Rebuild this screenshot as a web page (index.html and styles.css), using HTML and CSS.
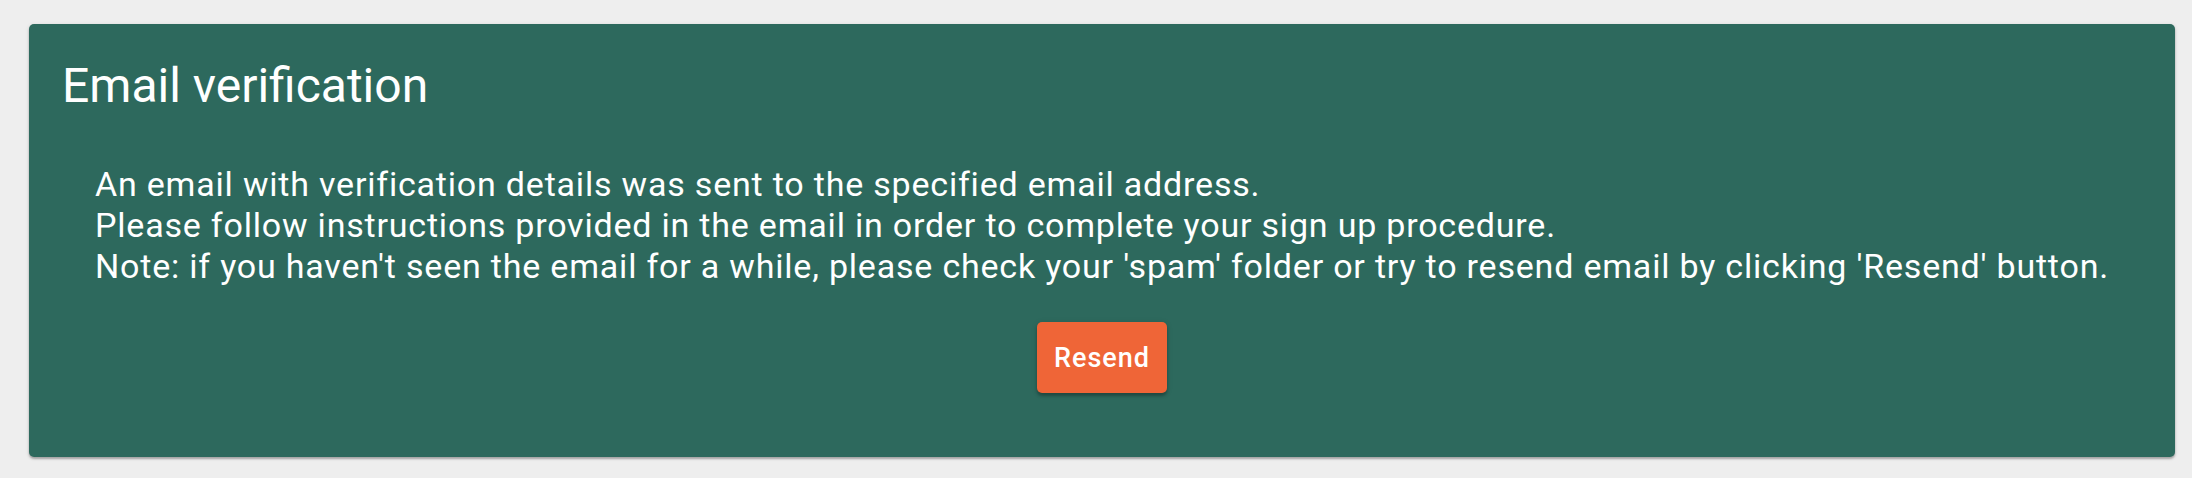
FILE: index.html
```html
<!DOCTYPE html>
<html lang="en">
<head>
    <meta charset="UTF-8">
    <meta name="viewport" content="width=device-width, initial-scale=1.0">
    <title>Email verification</title>
    <link rel="stylesheet" href="styles.css">
</head>
<body>

<div class="card">
    <h1 class="card-title">Email verification</h1>
    <div class="card-body">
        <p class="message">
            An email with verification details was sent to the specified email address.<br>
            Please follow instructions provided in the email in order to complete your sign up procedure.<br>
            Note: if you haven't seen the email for a while, please check your 'spam' folder or try to resend email by clicking 'Resend' button.
        </p>
        <div class="actions">
            <button class="button resend-button">Resend</button>
        </div>
    </div>
</div>

</body>
</html>
```

FILE: styles.css
```css
body {
    font-family: Roboto, "Liberation Sans", Arial, sans-serif;
    margin: 0;
    padding: 24px 17px 22px 29px;
    background-color: #eeeeee;
}
.card {
    background-color: #2d695d;
    color: #ffffff;
    border-radius: 5px;
    box-shadow: 0 2px 2px rgba(0, 0, 0, 0.25), 0 1px 4px rgba(0, 0, 0, 0.12);
    padding: 33px 33px 64px 33px;
}
.card-title {
    margin: 0;
    font-size: 48px;
    font-weight: 400;
    line-height: normal;
}
.card-body {
    padding: 50px 33px 0 33px;
}
.message {
    margin: 0;
    font-size: 34px;
    line-height: 41px;
    letter-spacing: 0.8px;
}
.actions {
    display: flex;
    justify-content: center;
    margin-top: 35px;
}
.button {
    font-family: inherit;
    height: 71px;
    padding: 0 17px;
    font-size: 27px;
    font-weight: 500;
    letter-spacing: 1px;
    cursor: pointer;
    border: none;
    border-radius: 5px;
    color: #ffffff;
}
.resend-button {
    background-color: #ef6537;
    box-shadow: 0 3px 3px rgba(0, 0, 0, 0.25), 0 1px 6px rgba(0, 0, 0, 0.12);
}
```
